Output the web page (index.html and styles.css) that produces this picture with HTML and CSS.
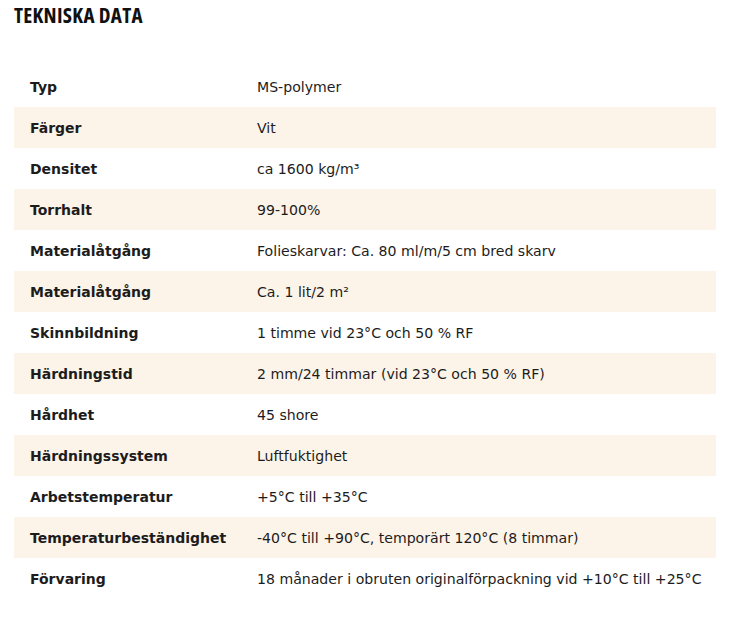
FILE: index.html
```html
<!DOCTYPE html>
<html lang="sv">
<head>
<meta charset="utf-8">
<title>Tekniska data</title>
<link rel="stylesheet" href="styles.css">
</head>
<body>
<div class="page">
  <h2 class="title">TEKNISKA DATA</h2>
  <table class="specs">
    <tbody>
      <tr><th>Typ</th><td>MS-polymer</td></tr>
      <tr class="alt"><th>Färger</th><td>Vit</td></tr>
      <tr><th>Densitet</th><td>ca 1600 kg/m³</td></tr>
      <tr class="alt"><th>Torrhalt</th><td>99-100%</td></tr>
      <tr><th>Materialåtgång</th><td>Folieskarvar: Ca. 80 ml/m/5 cm bred skarv</td></tr>
      <tr class="alt"><th>Materialåtgång</th><td>Ca. 1 lit/2 m²</td></tr>
      <tr><th>Skinnbildning</th><td>1 timme vid 23°C och 50 % RF</td></tr>
      <tr class="alt"><th>Härdningstid</th><td>2 mm/24 timmar (vid 23°C och 50 % RF)</td></tr>
      <tr><th>Hårdhet</th><td>45 shore</td></tr>
      <tr class="alt"><th>Härdningssystem</th><td>Luftfuktighet</td></tr>
      <tr><th>Arbetstemperatur</th><td>+5°C till +35°C</td></tr>
      <tr class="alt"><th>Temperaturbeständighet</th><td>-40°C till +90°C, temporärt 120°C (8 timmar)</td></tr>
      <tr><th>Förvaring</th><td>18 månader i obruten originalförpackning vid +10°C till +25°C</td></tr>
    </tbody>
  </table>
</div>
</body>
</html>
```
FILE: styles.css
```css
html, body {
  margin: 0;
  padding: 0;
  background: #ffffff;
}
.page {
  padding: 4px 0 0 14px;
  width: 702px;
  color: #1c1c1c;
  font-family: "DejaVu Sans", Verdana, sans-serif;
}
.title {
  margin: 0;
  font-family: "Open Sans", "DejaVu Sans Condensed", sans-serif;
  font-stretch: 75%;
  font-weight: 700;
  font-size: 21px;
  line-height: 22px;
  letter-spacing: 0.3px;
  color: #111111;
}
.specs {
  margin-top: 40px;
  width: 702px;
  border-collapse: collapse;
  font-size: 14.1px;
}
.specs tr {
  height: 41px;
}
.specs tr.alt {
  background: #fdf4e9;
}
.specs th,
.specs td {
  padding: 0;
  vertical-align: middle;
  text-align: left;
}
.specs td {
  padding-top: 1px;
}
.specs th {
  width: 227px;
  padding-left: 16px;
  padding-top: 1px;
  font-weight: bold;
  font-size: 14px;
}
```
